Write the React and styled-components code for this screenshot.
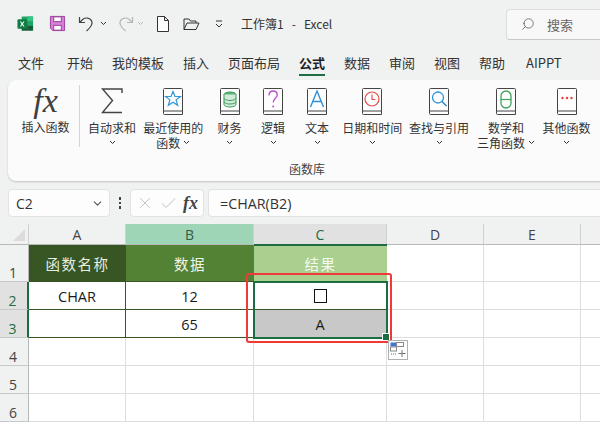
import styled, { createGlobalStyle } from 'styled-components';
import { ChevronDown, Search, X, Check } from 'lucide-react';

const GlobalStyle = createGlobalStyle`
  html, body {
    margin: 0;
    padding: 0;
    background: #f0f1f1;
  }
  * { box-sizing: border-box; }
`;

const Page = styled.div`
  width: 600px;
  height: 425px;
  overflow: hidden;
  background: #f0f1f1;
  color: #262626;
  font-family: "Noto Sans CJK SC", "Liberation Sans", sans-serif;
  display: flex;
  flex-direction: column;
`;

const TitleBar = styled.div`
  height: 48px;
  display: flex;
  align-items: center;
  padding: 0 0 1px 16px;
  flex: none;
`;

const QuickBtn = styled.div`
  display: flex;
  align-items: center;
  justify-content: center;
  flex: none;
  width: ${props => props.w}px;
  margin-right: ${props => props.gap || 0}px;
`;

const TitleText = styled.div`
  font-size: 12px;
  color: #333;
  white-space: pre;
  margin-top: -1px;
  width: 265px;
  flex: none;
`;

const SearchBox = styled.div`
  width: 100px;
  height: 31px;
  flex: none;
  margin-top: 1px;
  background: #f8f8f8;
  border: 1px solid #dcdcdc;
  border-bottom-color: #c8c8c8;
  border-radius: 4px;
  display: flex;
  align-items: center;
  gap: 12px;
  padding-left: 14px;
  font-size: 13px;
  color: #666;
`;

const Tabs = styled.div`
  height: 30px;
  display: flex;
  flex: none;
  padding-left: 18px;
  font-size: 13px;
`;

const Tab = styled.div`
  width: ${props => props.w}px;
  flex: none;
  height: 28px;
  padding-top: 6px;
  line-height: 18px;
  white-space: nowrap;
  position: relative;
  font-weight: ${props => (props.active ? 700 : 400)};
  color: ${props => (props.active ? '#1f1f1f' : '#333')};
  &::after {
    content: '';
    display: ${props => (props.active ? 'block' : 'none')};
    position: absolute;
    left: 0;
    bottom: 0;
    width: 26px;
    height: 2px;
    background: #1e6c41;
  }
`;

const Ribbon = styled.div`
  flex: none;
  height: 101px;
  margin: 2px -30px 0 8px;
  background: #fbfbfb;
  border-radius: 8px;
  box-shadow: 0 1px 2px rgba(0, 0, 0, 0.2);
  display: flex;
  flex-direction: column;
  padding-top: 5px;
`;

const Commands = styled.div`
  display: flex;
  height: 68px;
  flex: none;
`;

const Command = styled.div`
  width: ${props => props.w}px;
  margin-left: ${props => props.offset || 0}px;
  flex: none;
  display: flex;
  flex-direction: column;
  align-items: center;
  font-size: 12px;
  line-height: 15px;
  color: #333;
  white-space: nowrap;
`;

const CommandIcon = styled.div`
  height: 32px;
  display: flex;
  align-items: center;
  justify-content: center;
  margin-bottom: ${props => props.gap ?? 3}px;
`;

const LabelLine = styled.div`
  display: flex;
  align-items: center;
  height: 15px;
  gap: 3px;
`;

const Separator = styled.div`
  width: 1px;
  height: 62px;
  flex: none;
  background: #d5d5d5;
`;

const GroupName = styled.div`
  font-size: 12px;
  color: #444;
  text-align: center;
  width: 614px;
  margin-left: -8px;
  margin-top: 7px;
`;

const FormulaRow = styled.div`
  flex: none;
  height: 28px;
  margin-top: 8px;
  display: flex;
  align-items: stretch;
  padding-left: 8px;
`;

const Field = styled.div`
  background: #fdfdfd;
  border: 1px solid #e2e2e2;
  border-radius: 4px;
  display: flex;
  align-items: center;
  flex: none;
`;

const NameBox = styled(Field)`
  width: 102px;
  padding: 0 5px 0 7px;
  justify-content: space-between;
  font-family: "Open Sans", "Liberation Sans", sans-serif;
  font-size: 14px;
  color: #333;
`;

const Dots = styled.div`
  width: 20px;
  flex: none;
  display: flex;
  flex-direction: column;
  align-items: center;
  justify-content: center;
  gap: 2px;
  span {
    width: 2.5px;
    height: 2.5px;
    background: #444;
  }
`;

const FxBox = styled(Field)`
  width: 74px;
  padding: 0 5px 0 5px;
  justify-content: space-between;
`;

const FormulaInput = styled(Field)`
  margin-left: 4px;
  width: 400px;
  border-right: none;
  border-radius: 4px 0 0 4px;
  padding-left: 11px;
  font-family: "Open Sans", "Liberation Sans", sans-serif;
  font-size: 14.3px;
  color: #333;
`;

const FxMark = styled.span`
  font-family: "Liberation Serif", serif;
  font-style: italic;
  font-weight: ${props => props.weight || 400};
  font-size: ${props => props.size}px;
  line-height: 1;
  color: ${props => props.color || '#404040'};
`;

const SheetWrap = styled.div`
  position: relative;
  margin-top: 7px;
  flex: 1;
  background: #fff;
  overflow: hidden;
`;

const Sheet = styled.div`
  display: grid;
  grid-template-columns: 29px 97px 128px 133px 97px 97px 97px;
  grid-template-rows: 21px 37px 28px 28px 28px 28px 28px;
  font-family: "Open Sans", "Liberation Sans", sans-serif;
`;

const Corner = styled.div`
  background: #f0f1f1;
  border-right: 1px solid #cfcfcf;
  border-bottom: 1px solid #b8b8b8;
  position: relative;
  &::after {
    content: '';
    position: absolute;
    right: 3px;
    bottom: 3px;
    width: 0;
    height: 0;
    border-style: solid;
    border-width: 0 0 12px 12px;
    border-color: transparent transparent #dcdcdc transparent;
  }
`;

const ColHead = styled.div`
  background: ${props => props.bg || '#f0f1f1'};
  color: ${props => props.fg || '#444'};
  border-right: 1px solid #d0d0d0;
  border-bottom: 1px solid ${props => props.line || '#b8b8b8'};
  display: flex;
  align-items: center;
  justify-content: center;
  font-size: 14px;
`;

const RowHead = styled.div`
  background: ${props => (props.on ? '#e1e1e1' : '#f0f1f1')};
  color: ${props => (props.on ? '#1e6c41' : '#444')};
  border-bottom: 1px solid #c8c8c8;
  border-right: ${props => (props.on ? '2px solid #1e6c41' : '1px solid #b8b8b8')};
  display: flex;
  align-items: flex-end;
  justify-content: center;
  font-size: 14px;
  line-height: 17px;
  padding-right: 2px;
`;

const HeadCell = styled.div`
  background: ${props => props.bg};
  color: ${props => props.fg};
  font-family: "Noto Sans CJK SC", sans-serif;
  font-size: 14.5px;
  letter-spacing: ${props => props.track || 0}px;
  display: flex;
  align-items: center;
  justify-content: center;
  border-bottom: 1px solid #375623;
`;

const Cell = styled.div`
  background: ${props => props.bg || '#fff'};
  color: #1a1a1a;
  font-size: 14.5px;
  padding-top: 1px;
  display: flex;
  align-items: center;
  justify-content: center;
  border-right: 1px solid ${props => (props.framed ? '#375623' : '#dedede')};
  border-bottom: 1px solid ${props => (props.framed ? '#375623' : '#dedede')};
`;

const Blank = styled.div`
  display: inline-block;
  width: 13px;
  height: 14px;
  border: 1.5px solid #111;
`;

const Selection = styled.div`
  position: absolute;
  left: 253px;
  top: 57px;
  width: 135px;
  height: 58px;
  border: 2px solid #1e6c41;
  pointer-events: none;
`;

const TopEdge = styled.div`
  position: absolute;
  left: 254px;
  top: 20px;
  width: 133px;
  height: 2px;
  background: #1e6c41;
`;

const FillHandle = styled.div`
  position: absolute;
  right: -4px;
  bottom: -4px;
  width: 6px;
  height: 6px;
  background: #1e6c41;
  border: 1px solid #fff;
  box-sizing: content-box;
`;

const RedMark = styled.div`
  position: absolute;
  left: 246px;
  top: 49px;
  width: 146px;
  height: 70px;
  border: 2.5px solid #f03a3a;
  border-radius: 3px;
  pointer-events: none;
`;

const QuickAnalysis = styled.div`
  position: absolute;
  left: 388px;
  top: 116px;
  width: 20px;
  height: 20px;
  background: #fff;
  border: 1px solid #b0b0b0;
  display: flex;
  align-items: center;
  justify-content: center;
`;

const ExcelLogo = () => (
  <svg width="17" height="17" viewBox="0 0 18 18">
    <rect x="5" y="1.5" width="12" height="15" rx="1" fill="#21a366" />
    <rect x="11" y="1.5" width="6" height="5" fill="#33c481" />
    <rect x="5" y="6.5" width="6" height="5" fill="#107c41" />
    <rect x="11" y="11.5" width="6" height="5" fill="#185c37" />
    <rect x="5" y="11.5" width="6" height="5" fill="#185c37" />
    <rect x="0.5" y="4.5" width="10" height="10" rx="1" fill="#107c41" />
    <path d="M3 6.8h1.3l1.2 2 1.2-2H8L6.2 9.5 8 12.2H6.7L5.5 10.2 4.3 12.2H3l1.8-2.7z" fill="#fff" />
  </svg>
);

const SaveIcon = () => (
  <svg width="17" height="17" viewBox="0 0 18 18">
    <path d="M1.5 1.5h15v15H4l-2.5-2.5z" fill="#d37fd5" stroke="#9a3e9c" strokeWidth="1" />
    <rect x="5" y="2" width="8" height="5" fill="#fff" stroke="#9a3e9c" />
    <rect x="5" y="11" width="8" height="5" fill="#fff" stroke="#9a3e9c" />
  </svg>
);

const UndoIcon = ({ color, flip }) => (
  <svg width="18" height="18" viewBox="0 0 18 18" style={{ transform: flip ? 'scaleX(-1)' : 'none' }}>
    <path d="M1.5 2v5.5H7M1.5 7.5L5 4.2c2.6-2 7-1.4 8.5 1.4 1.6 3-.2 6.4-5 10.4" fill="none" stroke={color} strokeWidth="1.2" />
  </svg>
);

const NewFileIcon = () => (
  <svg width="14" height="18" viewBox="0 0 14 18">
    <path d="M1.5 1.5h7l4 4v11h-11zM8.5 1.5v4h4" fill="#fff" stroke="#333" strokeWidth="1" />
  </svg>
);

const FolderIcon = () => (
  <svg width="17" height="14" viewBox="0 0 17 14">
    <path d="M1 12.5V2h5l1.5 2H13v2M1 12.5h12L16 6H4z" fill="none" stroke="#333" strokeWidth="1" />
  </svg>
);

const QatMore = () => (
  <svg width="8" height="8" viewBox="0 0 8 8">
    <path d="M1 1h6M1 4l3 3 3-3" fill="none" stroke="#333" strokeWidth="1" />
  </svg>
);

const TinyDown = ({ color = '#333' }) => (
  <svg width="7" height="5" viewBox="0 0 7 5">
    <path d="M1 1l2.5 2.5L6 1" fill="none" stroke={color} strokeWidth="1" />
  </svg>
);

const SigmaIcon = () => (
  <svg width="22" height="26" viewBox="0 0 22 26">
    <path d="M21 5V1H1.5l10 11.5L1.5 24.5H21" fill="none" stroke="#444" strokeWidth="1.4" />
  </svg>
);

// book shell shared by the function category buttons
const BookIcon = ({ children }) => (
  <svg width="22" height="29" viewBox="0 0 22 29">
    <path d="M1.5 24V2.5a1 1 0 0 1 1-1h17a1 1 0 0 1 1 1V27.5H2.5a1 1 0 0 1-1-1z" fill="#fdfdfd" stroke="#444" strokeWidth="1" />
    <path d="M1.5 24h19" stroke="#444" strokeWidth="1" />
    {children}
  </svg>
);

const StarBook = () => (
  <BookIcon>
    <path d="M11 4.5l2 5h5.4l-4.3 3.4 1.6 5.4L11 15.2l-4.7 3.1 1.6-5.4-4.3-3.4H9z" fill="none" stroke="#2f96dc" strokeWidth="1.2" />
  </BookIcon>
);

const DataBook = () => (
  <BookIcon>
    <ellipse cx="11" cy="7.5" rx="6" ry="2.5" fill="#5cb176" stroke="#3f9a5c" />
    <path d="M5 7.5v10c0 1.4 2.7 2.5 6 2.5s6-1.1 6-2.5v-10M5 11c0 1.4 2.7 2.5 6 2.5s6-1.1 6-2.5M5 14.5c0 1.4 2.7 2.5 6 2.5s6-1.1 6-2.5" fill="#d2ead9" stroke="#3f9a5c" strokeWidth="1" />
  </BookIcon>
);

const QuestionBook = () => (
  <BookIcon>
    <path d="M7 8.5C7 5.5 9 4 11.2 4s4 1.6 4 4c0 3-4 3.6-4 7.5" fill="none" stroke="#b54fc7" strokeWidth="1.3" />
    <circle cx="11.2" cy="19.5" r="1" fill="#b54fc7" />
  </BookIcon>
);

const TextBook = () => (
  <BookIcon>
    <path d="M4.5 20L11 4l6.5 16M6.8 14.5h8.4" fill="none" stroke="#2f8fd8" strokeWidth="1.4" />
  </BookIcon>
);

const ClockBook = () => (
  <BookIcon>
    <circle cx="11" cy="12" r="7" fill="none" stroke="#e8484a" strokeWidth="1.2" />
    <path d="M11 7.5V12.5h3.5" fill="none" stroke="#e8484a" strokeWidth="1.1" />
  </BookIcon>
);

const LookupBook = () => (
  <BookIcon>
    <circle cx="10" cy="10.5" r="5.5" fill="none" stroke="#2f96dc" strokeWidth="1.3" />
    <path d="M14 14.5l4.5 4.5" stroke="#2f7fb8" strokeWidth="1.4" />
  </BookIcon>
);

const MathBook = () => (
  <BookIcon>
    <rect x="6" y="4" width="10" height="17" rx="5" fill="none" stroke="#3fa35a" strokeWidth="1.3" />
    <path d="M6 12.5h10" stroke="#3fa35a" strokeWidth="1.2" />
  </BookIcon>
);

const MoreBook = () => (
  <BookIcon>
    <circle cx="6.5" cy="11" r="1.2" fill="#ea3d3f" />
    <circle cx="11" cy="11" r="1.2" fill="#ea3d3f" />
    <circle cx="15.5" cy="11" r="1.2" fill="#ea3d3f" />
  </BookIcon>
);

const AnalysisIcon = () => (
  <svg width="16" height="16" viewBox="0 0 16 16">
    <rect x="0.5" y="0.5" width="6" height="4" fill="#3f76d8" />
    <rect x="6.5" y="0.5" width="7" height="4" fill="#fff" stroke="#888" />
    <rect x="0.5" y="5" width="6" height="4" fill="#fff" stroke="#888" />
    <path d="M1 12h6" stroke="#666" strokeDasharray="1 1" />
    <path d="M12 8v7M8.5 11.5h7" stroke="#777" />
  </svg>
);

const commands = [
  { w: 61, lines: ['自动求和'], icon: <SigmaIcon />, offset: 1.5 },
  { w: 61.5, lines: ['最近使用的', '函数'], icon: <StarBook /> },
  { w: 51, lines: ['财务'], icon: <DataBook /> },
  { w: 36, lines: ['逻辑'], icon: <QuestionBook /> },
  { w: 52, lines: ['文本'], icon: <TextBook /> },
  { w: 58.5, lines: ['日期和时间'], icon: <ClockBook /> },
  { w: 75, lines: ['查找与引用'], icon: <LookupBook /> },
  { w: 59, lines: ['数学和', '三角函数'], icon: <MathBook /> },
  { w: 62, lines: ['其他函数'], icon: <MoreBook /> },
];

const tabs = [
  ['文件', 49], ['开始', 45], ['我的模板', 71], ['插入', 45], ['页面布局', 71], ['公式', 45],
  ['数据', 45], ['审阅', 45], ['视图', 45], ['帮助', 47], ['AIPPT', 50],
];

const App = () => (
  <Page>
    <GlobalStyle />
    <TitleBar>
      <QuickBtn w={18} gap={14}><ExcelLogo /></QuickBtn>
      <QuickBtn w={18} gap={12}><SaveIcon /></QuickBtn>
      <QuickBtn w={18} gap={3}><UndoIcon color="#444" /></QuickBtn>
      <QuickBtn w={8} gap={9}><TinyDown /></QuickBtn>
      <QuickBtn w={18} gap={2}><UndoIcon color="#b5b5b5" flip /></QuickBtn>
      <QuickBtn w={8} gap={12}><TinyDown color="#b5b5b5" /></QuickBtn>
      <QuickBtn w={14} gap={13}><NewFileIcon /></QuickBtn>
      <QuickBtn w={17} gap={15}><FolderIcon /></QuickBtn>
      <QuickBtn w={8} gap={18}><QatMore /></QuickBtn>
      <TitleText>工作簿1   -   Excel</TitleText>
      <SearchBox>
        <Search size={14} color="#555" strokeWidth={1.3} style={{ transform: 'scaleX(-1)' }} />
        搜索
      </SearchBox>
    </TitleBar>

    <Tabs>
      {tabs.map(([name, w]) => (
        <Tab key={name} w={w} active={name === '公式'}>{name}</Tab>
      ))}
    </Tabs>

    <Ribbon>
      <Commands>
        <Command w={67} offset={4}>
          <CommandIcon gap={2}><FxMark size={34}>fx</FxMark></CommandIcon>
          <LabelLine>插入函数</LabelLine>
        </Command>
        <Separator />
        {commands.map(c => (
          <Command key={c.lines[0]} w={c.w} offset={c.offset}>
            <CommandIcon gap={3}>{c.icon}</CommandIcon>
            {c.lines.length === 1 ? (
              <>
                <LabelLine>{c.lines[0]}</LabelLine>
                <LabelLine><TinyDown /></LabelLine>
              </>
            ) : (
              <>
                <LabelLine>{c.lines[0]}</LabelLine>
                <LabelLine>{c.lines[1]}<TinyDown /></LabelLine>
              </>
            )}
          </Command>
        ))}
      </Commands>
      <GroupName>函数库</GroupName>
    </Ribbon>

    <FormulaRow>
      <NameBox>C2<ChevronDown size={13} color="#555" /></NameBox>
      <Dots><span /><span /><span /></Dots>
      <FxBox>
        <X size={18} color="#b8b8b8" strokeWidth={1.1} />
        <Check size={19} color="#b8b8b8" strokeWidth={1.1} />
        <FxMark size={18} weight={700} color="#444">fx</FxMark>
      </FxBox>
      <FormulaInput>=CHAR(B2)</FormulaInput>
    </FormulaRow>

    <SheetWrap>
      <Sheet>
        <Corner />
        <ColHead>A</ColHead>
        <ColHead bg="#9fd5b7" fg="#305c45">B</ColHead>
        <ColHead bg="#e1e1e1" fg="#1e6c41" line="#1e6c41">C</ColHead>
        <ColHead>D</ColHead>
        <ColHead>E</ColHead>
        <ColHead />

        <RowHead>1</RowHead>
        <HeadCell bg="#375623" fg="#e6eee0" track={1.5}>函数名称</HeadCell>
        <HeadCell bg="#548235" fg="#eef4ea" track={1.5}>数据</HeadCell>
        <HeadCell bg="#a9d08e" fg="#f4f9f0" track={1.5}>结果</HeadCell>
        <Cell />
        <Cell />
        <Cell />

        <RowHead on>2</RowHead>
        <Cell framed>CHAR</Cell>
        <Cell framed>12</Cell>
        <Cell framed><Blank /></Cell>
        <Cell />
        <Cell />
        <Cell />

        <RowHead on>3</RowHead>
        <Cell framed />
        <Cell framed>65</Cell>
        <Cell framed bg="#c8c8c8">A</Cell>
        <Cell />
        <Cell />
        <Cell />

        {[4, 5, 6].map(n => [
          <RowHead key={n}>{n}</RowHead>,
          ...[0, 1, 2, 3, 4, 5].map(i => <Cell key={`${n}-${i}`} />),
        ])}
      </Sheet>
      <TopEdge />
      <Selection><FillHandle /></Selection>
      <RedMark />
      <QuickAnalysis><AnalysisIcon /></QuickAnalysis>
    </SheetWrap>
  </Page>
);

export default App;
